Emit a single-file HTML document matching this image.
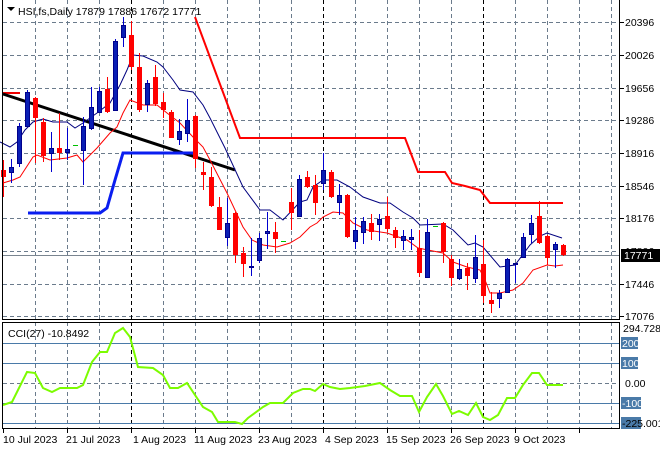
<!DOCTYPE html>
<html><head><meta charset="utf-8"><style>
html,body{margin:0;padding:0;background:#fff;}
svg{display:block;font-family:"Liberation Sans",sans-serif;font-size:10.5px;}
</style></head><body>
<svg width="660" height="450" viewBox="0 0 660 450" xmlns="http://www.w3.org/2000/svg">
<rect width="660" height="450" fill="#fff"/>
<!-- horizontal grid main -->
<g stroke="#6b7b8c" stroke-width="1" stroke-dasharray="4,3">
<line x1="3" x2="619" y1="22.5" y2="22.5"/><line x1="3" x2="619" y1="55.5" y2="55.5"/><line x1="3" x2="619" y1="88.5" y2="88.5"/><line x1="3" x2="619" y1="120.5" y2="120.5"/><line x1="3" x2="619" y1="153.5" y2="153.5"/><line x1="3" x2="619" y1="186.5" y2="186.5"/><line x1="3" x2="619" y1="218.5" y2="218.5"/><line x1="3" x2="619" y1="251.5" y2="251.5"/><line x1="3" x2="619" y1="284.5" y2="284.5"/><line x1="3" x2="619" y1="316.5" y2="316.5"/>
</g>
<!-- vertical grid -->
<g stroke="#6b7b8c" stroke-dasharray="4,3">
<path d="M35.5 0V319M67.5 0V319M99.5 0V319M163.5 0V319M195.5 0V319M227.5 0V319M259.5 0V319M291.5 0V319M355.5 0V319M387.5 0V319M419.5 0V319M451.5 0V319M515.5 0V319M547.5 0V319M579.5 0V319M611.5 0V319"/>
<path d="M35.5 322V428M67.5 322V428M99.5 322V428M163.5 322V428M195.5 322V428M227.5 322V428M259.5 322V428M291.5 322V428M355.5 322V428M387.5 322V428M419.5 322V428M451.5 322V428M515.5 322V428M547.5 322V428M579.5 322V428M611.5 322V428"/>
</g>
<g stroke="#000" stroke-dasharray="4,3">
<path d="M131.5 0V319M323.5 0V319M483.5 0V319M131.5 322V428M323.5 322V428M483.5 322V428"/>
</g>
<!-- price line -->
<line x1="3" x2="619" y1="255.5" y2="255.5" stroke="#7a8590"/>
<!-- indicator lines -->
<polyline fill="none" stroke="#e00" stroke-width="2" points="3,93 20,93"/>
<polyline fill="none" stroke="#f00" stroke-width="2" points="195,17 240,138 405,138 418,172 445,172 452,183 465,186 480,190 490,203 563,203"/>
<polyline fill="none" stroke="#000" stroke-width="3" points="3,94 235,170"/>
<polyline fill="none" stroke="#0a1ef0" stroke-width="3" points="28,213 100,213 107,208 115,180 123,153 195,153"/>
<polyline fill="none" stroke="#00007f" stroke-width="1" points="0,142 10,147 17,142 25,130 33,122 43,119 53,122 67,122 75,128 83,123 97,113 110,103 120,85 127,70 133,55 143,56 157,62 163,67 173,80 180,90 193,92 203,105 210,118 225,148 243,187 260,210 270,210 283,220 300,202 307,200 313,187 323,180 337,180 350,187 363,197 380,203 390,203 403,212 413,218 420,225 443,224 453,230 468,245 475,243 483,247 500,267 515,265 530,245 540,236 547,233 562,238"/>
<polyline fill="none" stroke="#f00" stroke-width="1" points="3,183 13,180 20,177 33,157 37,155 50,160 67,158 77,155 83,162 97,148 110,133 117,127 123,113 130,100 143,105 157,105 167,113 180,123 193,137 203,147 210,160 227,193 243,227 252,240 263,245 277,247 290,243 300,237 310,227 317,223 323,217 333,212 343,213 353,223 367,230 387,233 407,240 418,248 433,251 443,253 453,262 467,267 480,270 485,280 490,293 500,293 513,290 523,283 533,270 547,265 555,266 563,265"/>
<!-- candles -->
<g id="c" stroke-width="1"></g>
<g>
<path stroke="#f00" d="M3.5 160V197M35.5 97V163M43.5 118V162M59.5 113V160M107.5 77V113M131.5 21V70M139.5 53V112M155.5 65V106M163.5 93V118M171.5 110V138M195.5 115V168M203.5 162V190M211.5 167V207M219.5 197V230M235.5 212V263M243.5 247V277M275.5 222V253M291.5 188V230M307.5 171V188M315.5 175V215M331.5 170V198M347.5 194V238M371.5 214V240M387.5 197V232M395.5 227V248M419.5 230V277M443.5 222V263M451.5 255V286M467.5 263V290M483.5 240V303M491.5 292V313M539.5 201V244M547.5 235V265M563.5 244V256"/>
<path stroke="#0000d0" d="M11.5 159V183M19.5 123V167M27.5 90V127M51.5 132V172M67.5 128V160M83.5 117V185M91.5 87V130M99.5 87V113M115.5 39V111M123.5 17V47M147.5 80V112M179.5 119V145M187.5 99V142M227.5 198V246M251.5 238V276M259.5 233V263M267.5 212V249M299.5 175V217M323.5 153V190M339.5 184V215M355.5 217V249M363.5 217V244M379.5 214V241M403.5 230V250M411.5 229V250M427.5 219V278M459.5 259V280M475.5 235V283M499.5 290V308M507.5 258V293M515.5 263V283M523.5 233V258M531.5 215V243M555.5 242V268"/>
<g fill="#f00">
<rect x="1" y="170" width="5" height="7"/><rect x="33" y="98" width="5" height="20"/><rect x="41" y="122" width="5" height="34"/><rect x="57" y="148" width="5" height="5"/><rect x="105" y="89" width="5" height="23"/><rect x="129" y="35" width="5" height="32"/><rect x="137" y="67" width="5" height="43"/><rect x="153" y="77" width="5" height="27"/><rect x="161" y="102" width="5" height="8"/><rect x="169" y="112" width="5" height="26"/><rect x="193" y="116" width="5" height="43"/><rect x="201" y="172" width="5" height="3"/><rect x="209" y="177" width="5" height="29"/><rect x="217" y="207" width="5" height="23"/><rect x="233" y="213" width="5" height="42"/><rect x="241" y="253" width="5" height="11"/><rect x="273" y="232" width="5" height="7"/><rect x="289" y="202" width="5" height="11"/><rect x="305" y="177" width="5" height="10"/><rect x="313" y="185" width="5" height="18"/><rect x="329" y="172" width="5" height="25"/><rect x="345" y="195" width="5" height="42"/><rect x="369" y="223" width="5" height="9"/><rect x="385" y="216" width="5" height="13"/><rect x="393" y="230" width="5" height="8"/><rect x="417" y="248" width="5" height="25"/><rect x="441" y="223" width="5" height="29"/><rect x="449" y="259" width="5" height="19"/><rect x="465" y="268" width="5" height="8"/><rect x="481" y="264" width="5" height="32"/><rect x="489" y="300" width="5" height="4"/><rect x="537" y="216" width="5" height="27"/><rect x="545" y="236" width="5" height="22"/><rect x="561" y="245" width="5" height="10"/>
</g>
<g fill="#0a1eb4" stroke="#00008b">
<rect x="9.5" y="167.5" width="4" height="5"/><rect x="17.5" y="126.5" width="4" height="37"/><rect x="25.5" y="92.5" width="4" height="34"/><rect x="49.5" y="148.5" width="4" height="5"/><rect x="65.5" y="149.5" width="4" height="3"/><rect x="81.5" y="126.5" width="4" height="24"/><rect x="89.5" y="107.5" width="4" height="21"/><rect x="97.5" y="91.5" width="4" height="21"/><rect x="113.5" y="41.5" width="4" height="69"/><rect x="121.5" y="25.5" width="4" height="12"/><rect x="145.5" y="83.5" width="4" height="21"/><rect x="177.5" y="131.5" width="4" height="8"/><rect x="185.5" y="120.5" width="4" height="13"/><rect x="225.5" y="223.5" width="4" height="14"/><rect x="249.5" y="266.5" width="4" height="1"/><rect x="257.5" y="238.5" width="4" height="22"/><rect x="265.5" y="231.5" width="4" height="2"/><rect x="297.5" y="179.5" width="4" height="37"/><rect x="321.5" y="170.5" width="4" height="13"/><rect x="337.5" y="195.5" width="4" height="7"/><rect x="353.5" y="230.5" width="4" height="11"/><rect x="361.5" y="221.5" width="4" height="11"/><rect x="377.5" y="219.5" width="4" height="5"/><rect x="401.5" y="236.5" width="4" height="4"/><rect x="409.5" y="237.5" width="4" height="2"/><rect x="425.5" y="232.5" width="4" height="45"/><rect x="457.5" y="269.5" width="4" height="9"/><rect x="473.5" y="257.5" width="4" height="21"/><rect x="497.5" y="293.5" width="4" height="5"/><rect x="505.5" y="259.5" width="4" height="33"/><rect x="513.5" y="263.5" width="4" height="1"/><rect x="521.5" y="237.5" width="4" height="20"/><rect x="529.5" y="223.5" width="4" height="11"/><rect x="553.5" y="244.5" width="4" height="5"/>
</g>
<path stroke="#00c000" d="M73 145.5h5M281 241.5h5M433 226.5h5"/>
</g>
<!-- frame main -->
<path d="M2.5 0V319.5H619.5V0" fill="none" stroke="#000"/>
<!-- CCI panel -->
<g stroke="#4a7aa8" stroke-width="1">
<line x1="3" x2="619" y1="343.5" y2="343.5"/><line x1="3" x2="619" y1="363.5" y2="363.5"/><line x1="3" x2="619" y1="403.5" y2="403.5"/><line x1="3" x2="619" y1="423.5" y2="423.5"/>
</g>
<line x1="3" x2="619" y1="383.5" y2="383.5" stroke="#6b7b8c" stroke-dasharray="4,3"/>
<polyline fill="none" stroke="#7cfc00" stroke-width="2" points="3,405 12,402 18,390 27,372 35,373 43,388 52,392 60,388 77,388 83,385 92,362 100,352 107,352 115,333 123,328 130,337 138,367 153,368 163,375 170,388 178,388 187,383 203,407 212,412 218,422 235,422 242,424 248,418 263,407 270,403 283,403 293,393 303,389 310,389 315,391 323,384 330,387 340,389 350,388 365,386 380,383 390,390 400,396 412,396 419,412 427,397 436,384 443,396 452,414 459,411 468,415 476,403 483,417 490,420 498,415 507,398 515,398 523,385 532,373 539,373 547,385 563,385"/>
<rect x="2.5" y="322.5" width="617" height="106" fill="none" stroke="#000"/>
<!-- ticks -->
<path stroke="#000" d="M3.5 429v4M67.5 429v4M131.5 429v4M195.5 429v4M259.5 429v4M323.5 429v4M387.5 429v4M451.5 429v4M515.5 429v4M579.5 429v4M620 22.5h4M620 55.5h4M620 88.5h4M620 120.5h4M620 153.5h4M620 186.5h4M620 218.5h4M620 284.5h4M620 316.5h4"/>
<!-- text -->
<g fill="#000">
<path d="M7 7h8l-4 4z"/>
<text x="18" y="15">HSI,fs,Daily  17879 17886 17672 17771</text>
<text x="8" y="337">CCI(27) -10.8492</text>
<text x="3" y="443">10 Jul 2023</text><text x="66" y="443">21 Jul 2023</text><text x="133" y="443">1 Aug 2023</text><text x="194" y="443">11 Aug 2023</text><text x="258" y="443">23 Aug 2023</text><text x="325" y="443">4 Sep 2023</text><text x="386" y="443">15 Sep 2023</text><text x="450" y="443">26 Sep 2023</text><text x="514" y="443">9 Oct 2023</text>
<text x="625" y="26">20396</text><text x="625" y="59">20026</text><text x="625" y="92">19656</text><text x="625" y="124">19286</text><text x="625" y="157">18916</text><text x="625" y="190">18546</text><text x="625" y="222">18176</text><text x="625" y="255">17806</text><text x="625" y="288">17446</text><text x="625" y="320">17076</text>
<text x="623" y="332">294.7283</text>
<text x="625" y="387">0.00</text>
</g>
<rect x="621" y="249" width="39" height="13" fill="#000"/>
<text x="624" y="259" fill="#fff">17771</text>
<g fill="#4a7aa8"><rect x="621" y="337" width="17" height="12"/><rect x="621" y="357" width="17" height="12"/><rect x="621" y="397" width="20" height="12"/><rect x="621" y="417" width="20" height="12"/></g>
<g fill="#fff"><text x="622" y="347">200</text><text x="622" y="367">100</text><text x="622" y="407">-100</text></g>
<text x="622" y="427" fill="#000">-225.0015</text>
</svg>
</body></html>
